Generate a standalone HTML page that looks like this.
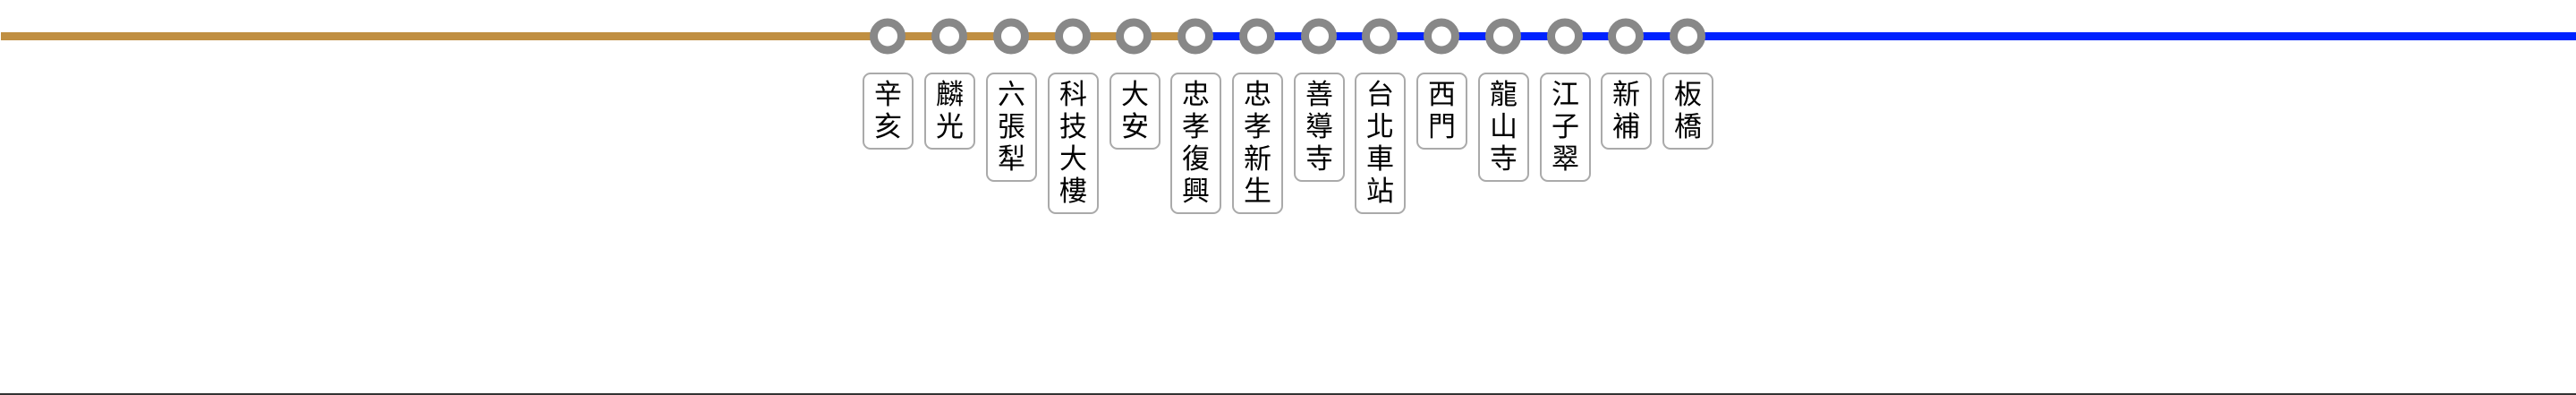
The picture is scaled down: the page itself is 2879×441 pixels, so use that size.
<!DOCTYPE html>
<html><head><meta charset="utf-8"><style>
html,body{margin:0;padding:0;background:#fff;}
body{width:2879px;height:441px;position:relative;overflow:hidden;}
.lbl{position:absolute;top:81px;width:53px;border:2px solid #aaa;border-radius:9px;background:#fff;
font-family:"Liberation Sans","Noto Sans CJK TC",sans-serif;font-size:31px;line-height:36px;text-align:center;padding:5px 0 5px 0;color:#000;box-sizing:content-box;}
.bot{position:absolute;left:0;top:439px;width:2879px;height:2px;background:#333;}
</style></head><body>
<svg width="2879" height="441" style="position:absolute;left:0;top:0">
<rect x="1" y="36" width="1338" height="9" fill="#c08f42"/>
<rect x="1338" y="36" width="1541" height="9" fill="#0022ff"/>
<g fill="#fff" stroke="#888" stroke-width="9">
<circle cx="992" cy="40.5" r="15.5"/>
<circle cx="1061" cy="40.5" r="15.5"/>
<circle cx="1130" cy="40.5" r="15.5"/>
<circle cx="1199" cy="40.5" r="15.5"/>
<circle cx="1267" cy="40.5" r="15.5"/>
<circle cx="1336" cy="40.5" r="15.5"/>
<circle cx="1405" cy="40.5" r="15.5"/>
<circle cx="1474" cy="40.5" r="15.5"/>
<circle cx="1542" cy="40.5" r="15.5"/>
<circle cx="1611" cy="40.5" r="15.5"/>
<circle cx="1680" cy="40.5" r="15.5"/>
<circle cx="1749" cy="40.5" r="15.5"/>
<circle cx="1817" cy="40.5" r="15.5"/>
<circle cx="1886" cy="40.5" r="15.5"/>
</g></svg>
<div class="lbl" style="left:964px">辛<br>亥</div>
<div class="lbl" style="left:1033px">麟<br>光</div>
<div class="lbl" style="left:1102px">六<br>張<br>犁</div>
<div class="lbl" style="left:1171px">科<br>技<br>大<br>樓</div>
<div class="lbl" style="left:1240px">大<br>安</div>
<div class="lbl" style="left:1308px">忠<br>孝<br>復<br>興</div>
<div class="lbl" style="left:1377px">忠<br>孝<br>新<br>生</div>
<div class="lbl" style="left:1446px">善<br>導<br>寺</div>
<div class="lbl" style="left:1514px">台<br>北<br>車<br>站</div>
<div class="lbl" style="left:1583px">西<br>門</div>
<div class="lbl" style="left:1652px">龍<br>山<br>寺</div>
<div class="lbl" style="left:1721px">江<br>子<br>翠</div>
<div class="lbl" style="left:1789px">新<br>補</div>
<div class="lbl" style="left:1858px">板<br>橋</div>
<div class="bot"></div>
</body></html>
